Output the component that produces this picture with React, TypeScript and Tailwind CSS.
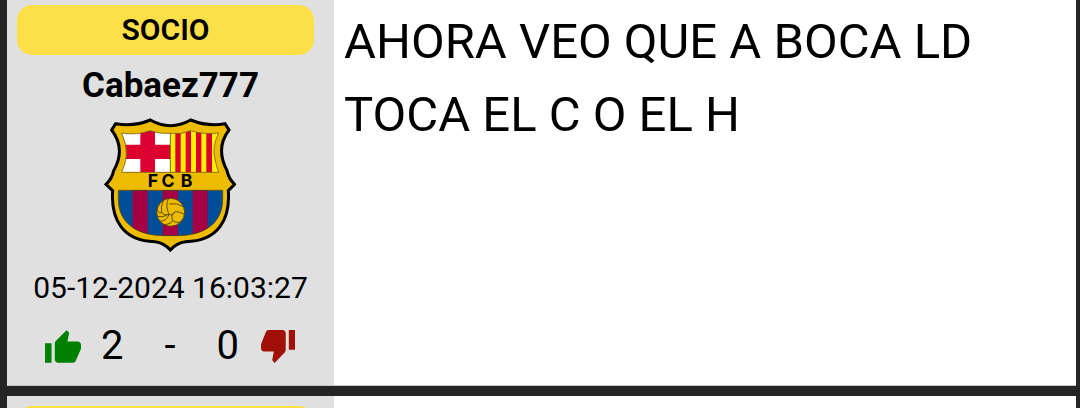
import React from "react";

function Crest() {
  return (
    <svg viewBox="27 24 396 405" className="h-[135px] w-[132px]" role="img" aria-label="FCB">
      <defs>
        <clipPath id="crest-top">
          <path d="M80 72 Q125 80 165 65 Q195 76 226 73 Q260 78 288 65 Q325 78 371 72 Q350 115 360 150 Q364 172 371 190 H80 Q92 165 94 140 Q96 105 80 72Z" />
        </clipPath>
        <clipPath id="crest-bottom">
          <path d="M70 244 H383 V270 C383 345 325 379 250 380 H204 C130 379 70 345 70 270Z" />
        </clipPath>
      </defs>
      <path
        d="M62 44 Q115 54 166 33 Q226 67 287 33 Q340 54 390 44 L402 63 C370 105 375 145 396 185 Q401 210 419 226 L400 245 C406 330 370 397 272 398 Q245 401 226 423 Q207 401 180 398 C83 397 47 330 53 245 L33 226 Q51 210 56 185 C79 145 82 105 50 63Z"
        fill="#edbb00" stroke="#000" strokeWidth="9" strokeLinejoin="miter"
      />
      <g clipPath="url(#crest-top)">
        <path d="M70 60H226V195H70Z" fill="#fff" />
        <path d="M136 55H180V195H136ZM70 107H226V150H70Z" fill="#db0030" />
        <path d="M226 60H380V195H226Z" fill="#fff000" />
        <path d="M241 60H257V195H241ZM272 60H288V195H272ZM303 60H319V195H303ZM334 60H351V195H334Z" fill="#db0030" />
        <path d="M226 60V195" stroke="#333" strokeWidth="2" />
      </g>
      <path d="M80 72 Q125 80 165 65 Q195 76 226 73 Q260 78 288 65 Q325 78 371 72 Q350 115 360 150 Q364 172 371 190 H80 Q92 165 94 140 Q96 105 80 72Z" fill="none" stroke="#5b4a10" strokeWidth="2" />
      <g clipPath="url(#crest-bottom)">
        <path d="M65 240H390V390H65Z" fill="#004d98" />
        <path d="M113 240H158V390H113ZM203 240H249V390H203ZM293 240H338V390H293Z" fill="#a50044" />
      </g>
      <path d="M70 244 H383 V270 C383 345 325 379 250 380 H204 C130 379 70 345 70 270Z" fill="none" stroke="#3c3410" strokeWidth="2" />
      <g fill="#000" fontFamily="Inter, sans-serif" fontWeight="700" fontSize="53" textAnchor="middle">
        <text x="174" y="235">F</text>
        <text x="219" y="235">C</text>
        <text x="275" y="235">B</text>
      </g>
      <g stroke="#4a3a08" strokeWidth="2.5" fill="none">
        <circle cx="227" cy="310" r="42" fill="#edbb00" />
        <path d="M220 269 Q210 290 222 316 Q232 322 239 309 Q247 305 268 316" />
        <path d="M205 275 Q196 293 200 311 Q209 322 222 316" />
        <path d="M223 285 Q246 280 264 293" />
        <path d="M186 299 Q188 314 200 311 M186 322 Q202 326 215 319" />
        <path d="M194 337 Q215 337 222 316 M239 309 Q226 319 233 334 Q242 344 258 338" />
        <path d="M207 347 Q230 345 233 334" />
      </g>
    </svg>
  );
}

function ThumbUp() {
  return (
    <svg viewBox="1 1 22 20" className="h-[33px] w-9" fill="#008000" aria-hidden="true">
      <path d="M1 21h4V9H1v12zm22-11c0-1.1-.9-2-2-2h-6.31l.95-4.57.03-.32c0-.41-.17-.79-.44-1.06L14.17 1 7.59 7.59C7.22 7.95 7 8.45 7 9v10c0 1.1.9 2 2 2h9c.83 0 1.54-.5 1.84-1.22l3.02-7.05c.09-.23.14-.47.14-.73v-2z" />
    </svg>
  );
}

function ThumbDown() {
  return (
    <svg viewBox="1 3 22 20" className="h-[33px] w-[34px]" preserveAspectRatio="none" fill="#a01008" aria-hidden="true">
      <path d="M15 3H6c-.83 0-1.54.5-1.84 1.22l-3.02 7.05c-.09.23-.14.47-.14.73v2c0 1.1.9 2 2 2h6.31l-.95 4.57-.03.32c0 .41.17.79.44 1.06L9.83 23l6.59-6.59c.36-.36.58-.86.58-1.41V5c0-1.1-.9-2-2-2zm4 0v12h4V3h-4z" />
    </svg>
  );
}

function Badge({ children }: { children?: React.ReactNode }) {
  return (
    <div className="mr-5 ml-[10px] h-[50px] rounded-[15px] bg-[#fddf47] text-center text-[30px] leading-[50px] font-semibold">
      {children}
    </div>
  );
}

export default function App() {
  return (
    <main className="flex h-screen flex-col gap-[10px] overflow-hidden bg-[#242424] pr-1 pl-[7px] font-[Roboto,sans-serif] text-black">
      <article className="flex shrink-0 border-b border-[#c4c6c6] bg-white">
        <aside className="w-[327px] shrink-0 bg-[#e0e0e0] pt-[5px] pb-[15px]">
          <Badge>SOCIO</Badge>
          <h2 className="mt-[10px] text-center text-[35px] leading-[42px] font-bold">Cabaez777</h2>
          <div className="mt-[10px] flex justify-center pr-[2px]">
            <Crest />
          </div>
          <time className="mt-[18px] block text-center text-[30px] leading-9">05-12-2024 16:03:27</time>
          <div className="mt-4 flex h-12 items-center justify-between pr-[39px] pl-[38px] text-[40px] leading-[48px]">
            <div className="flex items-center gap-5">
              <button type="button" aria-label="Me gusta"><ThumbUp /></button>
              <span>2</span>
            </div>
            <span>-</span>
            <div className="flex items-center gap-[22px]">
              <span>0</span>
              <button type="button" aria-label="No me gusta"><ThumbDown /></button>
            </div>
          </div>
        </aside>
        <p className="max-w-[680px] min-w-0 flex-1 px-[10px] pt-[5px] text-[49px] leading-[73px]">
          AHORA VEO QUE A BOCA LD TOCA EL C O EL H
        </p>
      </article>
      <article className="flex shrink-0 bg-white">
        <aside className="w-[327px] shrink-0 bg-[#e0e0e0] py-[10px]">
          <Badge />
        </aside>
      </article>
    </main>
  );
}
